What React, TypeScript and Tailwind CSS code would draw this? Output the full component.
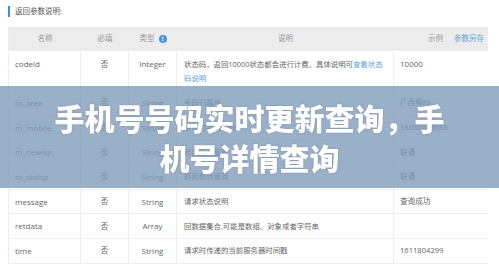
import React from "react";

const rows: { name: string; req: string; type: string; desc: React.ReactNode; ex: string }[] = [
  { name: "m_area", req: "否", type: "String", desc: "号码归属地", ex: "广西柳州" },
  { name: "m_mobile", req: "否", type: "String", desc: "查询的手机号码", ex: "18688888688" },
  { name: "m_newisp", req: "否", type: "String", desc: "转网后运营商", ex: "联通" },
  { name: "m_oldisp", req: "否", type: "String", desc: "转网前运营商", ex: "联通" },
  { name: "message", req: "否", type: "String", desc: "请求状态说明", ex: "查询成功" },
  { name: "retdata", req: "否", type: "Array", desc: "回数据集合,可能是数组、对象或者字符串", ex: "" },
  { name: "time", req: "否", type: "String", desc: "请求时传递的当前服务器时间戳", ex: "1611804299" },
];

const cols = "grid grid-cols-[72px_48px_48px_217px_95px]";

export default function App() {
  return (
    <div
      className="relative w-[499px] h-[271px] overflow-hidden bg-white text-[#666]"
      style={{ fontFamily: "'Open Sans','Noto Sans CJK SC',sans-serif" }}
    >
      <div className="flex items-center h-[22px] pl-[8px] pt-[1px] gap-[5px]">
        <div className="w-[2px] h-[11px] bg-[#3b8de0]" />
        <span className="text-[7.5px] text-[#555]">返回参数说明:</span>
      </div>
      <div className="ml-[8px] mt-[5px] w-[480px] border-l border-[#eeeeee]">
        <div className={`${cols} h-[24px] bg-[#ececec] text-[7.5px] text-[#999] items-center`}>
          <div className="text-center">名称</div>
          <div className="text-center">必填</div>
          <div className="flex items-center justify-center gap-[4px]">
            <span>类型</span>
            <span className="w-[8px] h-[8px] rounded-full bg-[#4a98dc] text-white text-[6px] leading-[8px] text-center font-bold">!</span>
          </div>
          <div className="text-center">说明</div>
          <div className="flex items-center justify-end gap-[11px] pr-[5px]">
            <span>示例</span>
            <span className="text-[#5aa3de]">参数另存</span>
          </div>
        </div>
        <div className={`${cols} h-[40px] border-b border-[#eeeeee] text-[8px] leading-[14px]`}>
          <div className="pt-[6px] pl-[6px] border-r border-[#eeeeee]">codeid</div>
          <div className="pt-[6px] text-center border-r border-[#eeeeee] text-[7.5px]">否</div>
          <div className="pt-[6px] text-center border-r border-[#eeeeee]">Integer</div>
          <div className="pt-[6px] pl-[7px] border-r border-[#eeeeee] text-[7.4px]">
            <div className="whitespace-nowrap">
              状态码，返回10000状态都会进行计费。具体说明可<span className="text-[#5aa3de]">查看状态</span>
            </div>
            <div className="text-[#5aa3de]">码说明</div>
          </div>
          <div className="pt-[6px] pl-[6px]">10000</div>
        </div>
        {rows.map((r) => (
          <div key={r.name} className={`${cols} h-[24.7px] border-b border-[#eeeeee] text-[8px]`}>
            <div className="flex items-center pl-[6px] border-r border-[#eeeeee]">{r.name}</div>
            <div className="flex items-center justify-center border-r border-[#eeeeee] text-[7.5px]">{r.req}</div>
            <div className="flex items-center justify-center border-r border-[#eeeeee]">{r.type}</div>
            <div className="flex items-center pl-[7px] border-r border-[#eeeeee] text-[7.4px] whitespace-nowrap">{r.desc}</div>
            <div className="flex items-center pl-[6px] text-[7.6px]">{r.ex}</div>
          </div>
        ))}
      </div>
      <div className="absolute left-0 right-0 top-[86px] h-[102px] bg-[#7f9cba]/80 backdrop-blur-[0.6px] flex items-center justify-center">
        <div
          className="w-[400px] text-center text-white font-black text-[30px] leading-[40px] [text-shadow:0_0_2px_rgba(60,80,110,0.35)]"
          style={{ fontFamily: "'Noto Sans CJK SC',sans-serif" }}
        >
          手机号号码实时更新查询，手机号详情查询
        </div>
      </div>
    </div>
  );
}
